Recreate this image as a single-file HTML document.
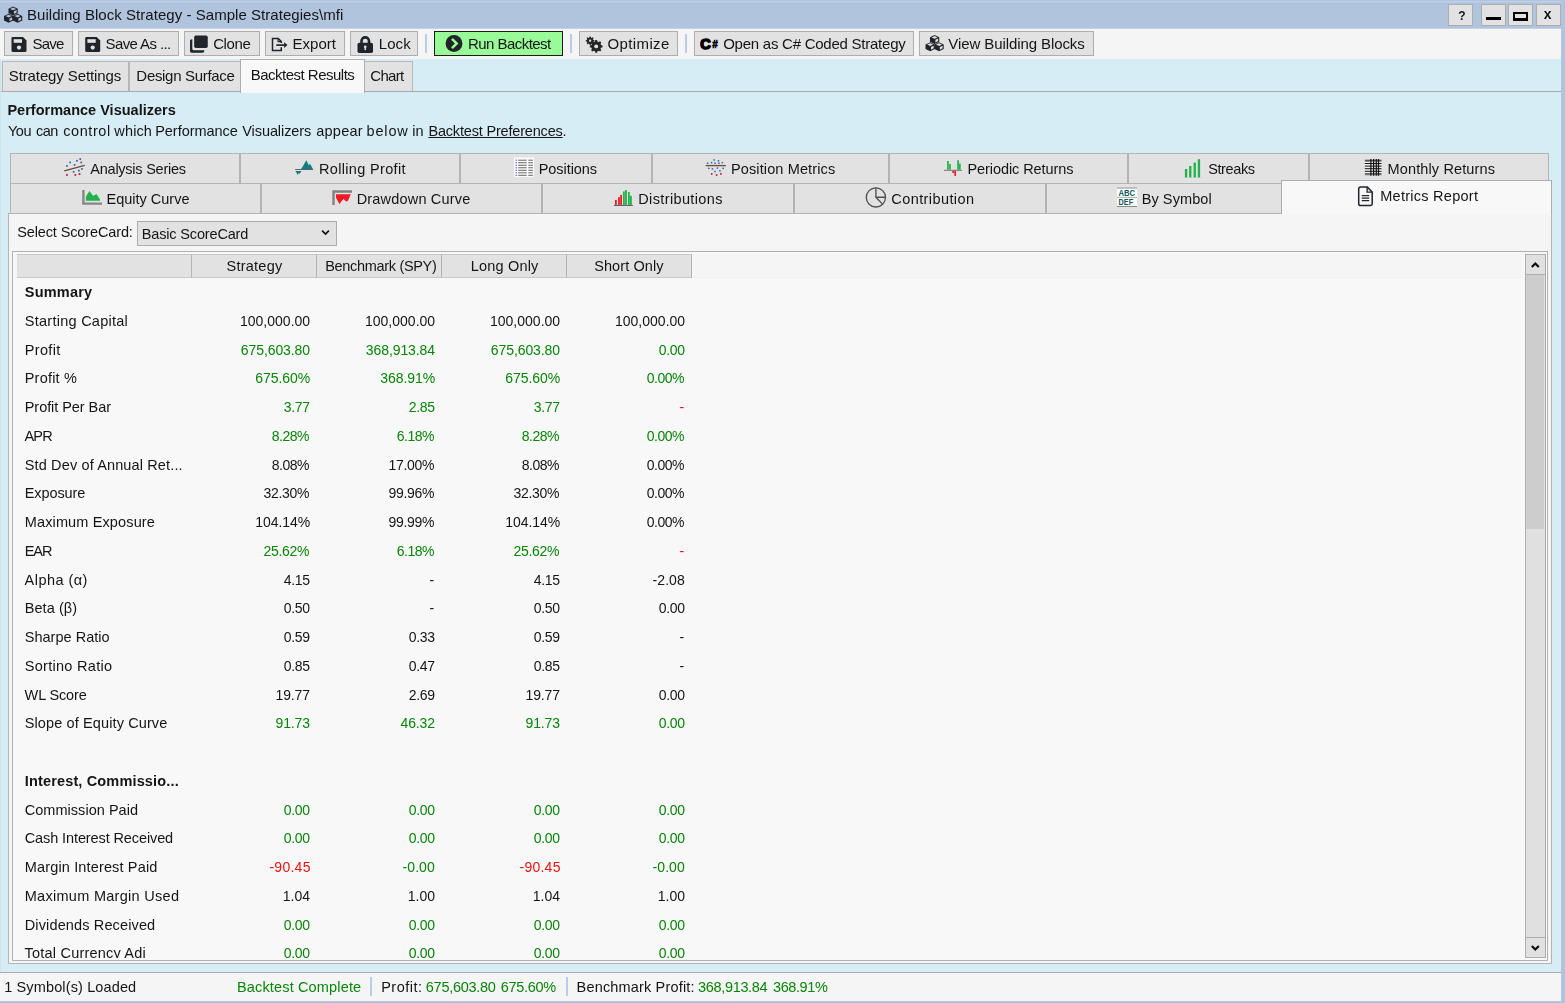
<!DOCTYPE html>
<html lang="en"><head><meta charset="utf-8"><title>Building Block Strategy - Sample Strategies\mfi</title>
<style>
*{box-sizing:border-box;margin:0;padding:0}
html,body{width:1565px;height:1003px;overflow:hidden}
body{position:relative;background:#d7edf5;font-family:"Liberation Sans",sans-serif;font-size:14.500px;color:#151515;}
.abs,.tx,.ic{position:absolute}
.tx{white-space:nowrap;line-height:20px;height:20px;font-size:14.500px;z-index:5;will-change:opacity}
.ic{z-index:5}.ic svg{display:block}
#title{left:0;top:0;width:1565px;height:28px;background:linear-gradient(#b0c4de 0,#b0c4de 1px,#c0d0e8 1px,#c0d0e8 2px,#b5c8e0 2px,#b5c8e0 3px,#b0c4de 3px)}
.wb{position:absolute;top:4px;width:25px;height:22px;background:#e2e2e2;border:1px solid #adadad}
#rb{right:0;top:0;width:4.500px;height:1003px;background:#b0c4de}
#bb{left:0;top:1001px;width:1565px;height:2px;background:#b0c4de}
#toolbar{left:0;top:28px;width:1561px;height:31px;background:#f5f5f5}
.btn{position:absolute;top:31px;height:25px;background:#e2e2e2;border:1px solid #adadad}
.sep{position:absolute;top:34px;width:2px;height:19px;background:#b9cde8}
.tab1{position:absolute;top:61px;height:30px;background:#e2e2e2;border:1px solid #b8b8b8;border-bottom:none}
.tab1.sel{top:59px;height:34px;background:#f8f8f8;border-color:#adadad;z-index:2}
#line1{left:0;top:91px;width:1561px;height:1px;background:#a9a9a9}
.tab2{position:absolute;height:30px;background:#e2e2e2;border:1px solid #b4b4b4}
.tab2.sel{background:#f8f8f8;border-color:#adadad;border-bottom:none;z-index:3}
#panel{left:8px;top:213px;width:1544px;height:751px;background:#f5f5f5;border:1px solid #b4b4b4}
#grid{left:12px;top:251px;width:1536px;height:710px;background:#f8f8f8;border:1px solid #b0b0b0;overflow:hidden}
.hc{position:absolute;top:254px;height:24px;background:#e2e2e2;border-right:1px solid #b4b4b4;border-bottom:1px solid #c8c8c8;border-top:1px solid #c8c8c8}
.g{color:#088408}.r{color:#ee1111}
b{font-weight:bold}
#status{left:0;top:972px;width:1561px;height:29px;background:#f5f5f5;border-top:1px solid #a9a9a9}
</style></head><body>

<div id="title" class="abs"></div>
<div class="ic" style="left:4px;top:6px"><svg width="18" height="17" viewBox="0 0 18 17" style="overflow:visible"><g transform="translate(0.000 0.500)"><path d="M9.10 0.00L13.75 2.35L13.75 6.68L9.10 9.02L4.45 6.68L4.45 2.35Z" fill="#212529"/><path d="M9.10 1.06L12.08 2.39L9.10 3.75L6.12 2.39Z" fill="#b0c4de"/><path d="M9.94 4.81L12.63 3.52L12.63 6.09L9.94 7.61Z" fill="#b0c4de"/><path d="M4.65 7.20L9.30 9.55L9.30 13.88L4.65 16.22L0.00 13.88L0.00 9.55Z" fill="#212529"/><path d="M4.65 8.26L7.63 9.59L4.65 10.95L1.67 9.59Z" fill="#b0c4de"/><path d="M5.49 12.01L8.18 10.72L8.18 13.29L5.49 14.81Z" fill="#b0c4de"/><path d="M13.55 7.20L18.20 9.55L18.20 13.88L13.55 16.22L8.90 13.88L8.90 9.55Z" fill="#212529"/><path d="M13.55 8.26L16.53 9.59L13.55 10.95L10.57 9.59Z" fill="#b0c4de"/><path d="M14.39 12.01L17.08 10.72L17.08 13.29L14.39 14.81Z" fill="#b0c4de"/></g></svg></div>
<div id="t1" class="tx" style="top:4.6px;left:26.98px;font-size:15px;letter-spacing:0.045px;">Building Block Strategy - Sample Strategies\mfi</div>
<div class="wb" style="left:1448px"></div>
<div class="wb" style="left:1481px"></div>
<div class="wb" style="left:1508px"></div>
<div class="wb" style="left:1536px"></div>
<div id="t2" class="tx" style="top:5.5px;left:1458.15px;font-size:12px;"><b>?</b></div>
<div class="abs" style="left:1485.500px;top:17px;width:15px;height:3px;background:#000"></div>
<div class="abs" style="left:1513px;top:12px;width:15px;height:9px;border:3px solid #000;border-width:2.500px 2.500px 3px 2.500px"></div>
<div id="t3" class="tx" style="top:4.3px;left:1543.76px;font-size:14px;"><b>x</b></div>
<div id="toolbar" class="abs"></div>
<div class="abs" style="left:0;top:28px;width:1561px;height:1px;background:#c3d2e5"></div>
<div class="btn" style="left:4px;width:69px;"></div>
<div class="ic" style="left:11px;top:37px"><svg width="15" height="15" viewBox="0 0 15 15" style="overflow:visible"><g transform="translate(0.500 0.000)"><path d="M1.2 0h10.3L15 3.5v10.3c0 .7-.5 1.2-1.2 1.2H1.2C.5 15 0 14.500 0 13.800V1.200C0 .5.5 0 1.200 0z" fill="#212529"/><rect x="2.200" y="2.200" width="8.300" height="3.600" fill="#e2e2e2"/><circle cx="7.500" cy="10.600" r="2.100" fill="#e2e2e2"/></g></svg></div>
<div id="t4" class="tx" style="top:34px;left:32.42px;font-size:15px;letter-spacing:-0.78px;">Save</div>
<div class="btn" style="left:78px;width:101px;"></div>
<div class="ic" style="left:85px;top:37px"><svg width="15" height="15" viewBox="0 0 15 15" style="overflow:visible"><g transform="translate(0.200 0.000)"><path d="M1.2 0h10.3L15 3.5v10.3c0 .7-.5 1.2-1.2 1.2H1.2C.5 15 0 14.500 0 13.800V1.200C0 .5.5 0 1.200 0z" fill="#212529"/><rect x="2.200" y="2.200" width="8.300" height="3.600" fill="#e2e2e2"/><circle cx="7.500" cy="10.600" r="2.100" fill="#e2e2e2"/></g></svg></div>
<div id="t5" class="tx" style="top:34px;left:105.59px;font-size:15px;letter-spacing:-0.603px;">Save As ...</div>
<div class="btn" style="left:184px;width:76px;"></div>
<div class="ic" style="left:189px;top:35px"><svg width="18.500" height="17.500" viewBox="0 0 17 16" style="overflow:visible"><g transform="translate(0.735 0.457)"><rect x="4" y="0" width="12.500" height="11.500" rx="1.600" fill="#212529"/><path d="M2.300 3.500v8.300c0 1 .8 1.800 1.800 1.800h9.200v.7c0 .9-.7 1.600-1.600 1.600H1.800C.8 15.900.200 15.200.200 14.300V5.100c0-.9.700-1.600 1.600-1.600z" fill="#212529"/></g></svg></div>
<div id="t6" class="tx" style="top:34px;left:213.15px;font-size:15px;letter-spacing:-0.36px;">Clone</div>
<div class="btn" style="left:265px;width:80px;"></div>
<div class="ic" style="left:271px;top:37px"><svg width="17" height="14" viewBox="0 0 17 14" fill="none" stroke="#212529" stroke-width="1.500" style="overflow:visible"><g transform="translate(0.500 0.500)"><path d="M9.800 9.800V13H1V1h5.800l3 3v1.500"/><path d="M6.600 1v3.200h3.200" stroke-width="1.200"/><path d="M4.800 7.600h9" stroke-width="1.700"/><path d="M12.600 4.800l3.400 2.800-3.400 2.800z" fill="#212529" stroke="none"/></g></svg></div>
<div id="t7" class="tx" style="top:34px;left:292.59px;font-size:15px;">Export</div>
<div class="btn" style="left:350px;width:68px;"></div>
<div class="ic" style="left:357px;top:35px"><svg width="15.500" height="17.500" viewBox="0 0 15.500 17.500" style="overflow:visible"><g transform="translate(0.500 0.500)"><path d="M4 8V5.600a3.750 3.750 0 0 1 7.500 0V8" fill="none" stroke="#212529" stroke-width="2.600"/><rect x="0" y="7.300" width="15.500" height="10.200" rx="1.700" fill="#212529"/><circle cx="7.750" cy="11.300" r="1.300" fill="#e2e2e2"/><rect x="7" y="11.300" width="1.500" height="3.300" fill="#e2e2e2"/></g></svg></div>
<div id="t8" class="tx" style="top:34px;left:378.81px;font-size:15px;letter-spacing:0.06px;">Lock</div>
<div class="sep" style="left:425px;width:2px;"></div>
<div class="btn" style="left:434px;width:129px;background:#98fb98;border-color:#1c1c1c"></div>
<div class="ic" style="left:445px;top:35px"><svg width="17" height="17" viewBox="0 0 17 17" style="overflow:visible"><g transform="translate(0.500 0.000)"><circle cx="8.500" cy="8.500" r="8.400" fill="#212529"/><path d="M6.500 3.900L11.200 8.500 6.500 13.100" fill="none" stroke="#98fb98" stroke-width="2.500"/></g></svg></div>
<div id="t9" class="tx" style="top:34px;left:467.98px;font-size:15px;letter-spacing:-0.541px;">Run Backtest</div>
<div class="sep" style="left:570px;width:2px;"></div>
<div class="btn" style="left:579px;width:99px;"></div>
<div class="ic" style="left:585px;top:35px"><svg width="18" height="18" viewBox="0 0 18 18"><path d="M4.27 2.73L4.56 1.39L5.74 1.39L6.03 2.73L6.67 2.99L7.82 2.25L8.65 3.08L7.91 4.23L8.17 4.87L9.51 5.16L9.51 6.34L8.17 6.63L7.91 7.27L8.65 8.42L7.82 9.25L6.67 8.51L6.03 8.77L5.74 10.11L4.56 10.11L4.27 8.77L3.63 8.51L2.48 9.25L1.65 8.42L2.39 7.27L2.13 6.63L0.79 6.34L0.79 5.16L2.13 4.87L2.39 4.23L1.65 3.08L2.48 2.25L3.63 2.99Z" fill="#262626"/><circle cx="5.15" cy="5.75" r="2.90" fill="#262626"/><circle cx="5.15" cy="5.75" r="1.15" fill="#e2e2e2"/><path d="M9.83 6.69L10.35 5.06L12.05 5.06L12.57 6.69L13.56 7.11L15.08 6.31L16.29 7.52L15.49 9.04L15.91 10.03L17.54 10.55L17.54 12.25L15.91 12.77L15.49 13.76L16.29 15.28L15.08 16.49L13.56 15.69L12.57 16.11L12.05 17.74L10.35 17.74L9.83 16.11L8.84 15.69L7.32 16.49L6.11 15.28L6.91 13.76L6.49 12.77L4.86 12.25L4.86 10.55L6.49 10.03L6.91 9.04L6.11 7.52L7.32 6.31L8.84 7.11Z" fill="#262626"/><circle cx="11.20" cy="11.40" r="4.51" fill="#262626"/><circle cx="11.20" cy="11.40" r="1.95" fill="#e2e2e2"/></svg></div>
<div id="t10" class="tx" style="top:34px;left:607.59px;font-size:15px;letter-spacing:0.363px;">Optimize</div>
<div class="sep" style="left:685px;width:2px;"></div>
<div class="btn" style="left:694px;width:220px;"></div>
<div class="ic" style="left:700px;top:37px"><svg width="20" height="16" viewBox="0 0 20 16"><text x="0.300" y="12.300" font-family="Liberation Sans,sans-serif" font-weight="bold" font-size="14.500" fill="#000" stroke="#000" stroke-width="1.500" stroke-linejoin="round">C</text><text x="12.200" y="10.800" font-family="Liberation Sans,sans-serif" font-weight="bold" font-size="10" fill="#000" stroke="#000" stroke-width=".5">#</text></svg></div>
<div id="t11" class="tx" style="top:34px;left:723.15px;font-size:15px;letter-spacing:-0.244px;">Open as C# Coded Strategy</div>
<div class="btn" style="left:919px;width:175px;"></div>
<div class="ic" style="left:925px;top:35px"><svg width="18" height="17" viewBox="0 0 18 17" style="overflow:visible"><g transform="translate(0.500 0.000)"><path d="M9.10 0.00L13.75 2.35L13.75 6.68L9.10 9.02L4.45 6.68L4.45 2.35Z" fill="#212529"/><path d="M9.10 1.06L12.08 2.39L9.10 3.75L6.12 2.39Z" fill="#e2e2e2"/><path d="M9.94 4.81L12.63 3.52L12.63 6.09L9.94 7.61Z" fill="#e2e2e2"/><path d="M4.65 7.20L9.30 9.55L9.30 13.88L4.65 16.22L0.00 13.88L0.00 9.55Z" fill="#212529"/><path d="M4.65 8.26L7.63 9.59L4.65 10.95L1.67 9.59Z" fill="#e2e2e2"/><path d="M5.49 12.01L8.18 10.72L8.18 13.29L5.49 14.81Z" fill="#e2e2e2"/><path d="M13.55 7.20L18.20 9.55L18.20 13.88L13.55 16.22L8.90 13.88L8.90 9.55Z" fill="#212529"/><path d="M13.55 8.26L16.53 9.59L13.55 10.95L10.57 9.59Z" fill="#e2e2e2"/><path d="M14.39 12.01L17.08 10.72L17.08 13.29L14.39 14.81Z" fill="#e2e2e2"/></g></svg></div>
<div id="t12" class="tx" style="top:34px;left:948.32px;font-size:15px;letter-spacing:-0.089px;">View Building Blocks</div>
<div id="line1" class="abs"></div>
<div class="tab1" style="left:2px;width:127px;"></div>
<div id="t13" class="tx" style="top:65.8px;left:8.76px;font-size:15px;letter-spacing:-0.108px;">Strategy Settings</div>
<div class="tab1" style="left:129px;width:112px;"></div>
<div id="t14" class="tx" style="top:65.8px;left:136.37px;font-size:15px;letter-spacing:-0.312px;">Design Surface</div>
<div class="tab1 sel" style="left:240px;width:125px;"></div>
<div id="t15" class="tx" style="top:65.1px;left:250.76px;font-size:15px;letter-spacing:-0.51px;">Backtest Results</div>
<div class="tab1" style="left:364px;width:49px;"></div>
<div id="t16" class="tx" style="top:65.8px;left:370.32px;font-size:15px;letter-spacing:-0.724px;">Chart</div>
<div id="t17" class="tx" style="top:99.6px;left:7.42px;letter-spacing:0.009px;"><b>Performance Visualizers</b></div>
<div id="t18" class="tx" style="top:121px;left:7.96px;letter-spacing:-0.45px;">You</div>
<div id="t19" class="tx" style="top:121px;left:36.1px;letter-spacing:-0.63px;">can</div>
<div id="t20" class="tx" style="top:121px;left:63.22px;letter-spacing:0.57px;">control</div>
<div id="t21" class="tx" style="top:121px;left:114.36px;letter-spacing:0.127px;">which</div>
<div id="t22" class="tx" style="top:121px;left:155.2px;letter-spacing:-0.036px;">Performance</div>
<div id="t23" class="tx" style="top:121px;left:242.22px;letter-spacing:-0.072px;">Visualizers</div>
<div id="t24" class="tx" style="top:121px;left:316.22px;letter-spacing:0.252px;">appear</div>
<div id="t25" class="tx" style="top:121px;left:366.46px;letter-spacing:0.863px;">below</div>
<div id="t26" class="tx" style="top:121px;left:412.32px;">in</div>
<div id="t27" class="tx" style="top:121px;left:428.4px;letter-spacing:-0.18px;"><u>Backtest Preferences</u>.</div>
<div id="panel" class="abs"></div>
<div class="tab2" style="left:10px;width:230px;top:153px;height:31px"></div>
<div class="ic" style="left:63px;top:158px"><svg width="23" height="19" viewBox="0 0 23 19"><rect x="16.4" y="0.2" width="1.7" height="1.7" fill="#2f5fb3"/><rect x="13.1" y="1.9" width="1.7" height="1.7" fill="#2f5fb3"/><rect x="6.2" y="3.6" width="1.7" height="1.7" fill="#2f5fb3"/><rect x="17.4" y="3.6" width="1.7" height="1.7" fill="#2f5fb3"/><rect x="10.7" y="6.1" width="1.7" height="1.7" fill="#2f5fb3"/><rect x="3.1" y="7.1" width="1.7" height="1.7" fill="#2f5fb3"/><rect x="18.1" y="10.1" width="1.7" height="1.7" fill="#2f5fb3"/><rect x="15.0" y="11.8" width="1.7" height="1.7" fill="#2f5fb3"/><rect x="9.8" y="13.0" width="1.7" height="1.7" fill="#2f5fb3"/><rect x="3.1" y="16.1" width="1.7" height="1.7" fill="#b3122a"/><rect x="11.5" y="16.1" width="1.7" height="1.7" fill="#b3122a"/><rect x="15.7" y="15.2" width="1.7" height="1.7" fill="#b3122a"/><path d="M1.300 12.900L21.700 7.300" stroke="#6b4a30" stroke-width="1.300"/></svg></div>
<div id="t28" class="tx" style="top:158.9px;left:90.32px;letter-spacing:-0.244px;">Analysis Series</div>
<div class="tab2" style="left:240px;width:220px;top:153px;height:31px"></div>
<div class="ic" style="left:294px;top:159px"><svg width="20" height="17" viewBox="0 0 20 17"><path d="M6.800 10.200L8.900 7.200 12.300 1.300 14.800 6.300 16 4.700 19.100 10.200Z" fill="#128080"/><path d="M1.500 11.900H7.400L5.800 14.900 4.900 13.700 3.700 15.900Z" fill="#128080"/><path d="M1.100 10.500h18" stroke="#555" stroke-width=".9"/></svg></div>
<div id="t29" class="tx" style="top:158.9px;left:318.98px;letter-spacing:0.332px;">Rolling Profit</div>
<div class="tab2" style="left:460px;width:192px;top:153px;height:31px"></div>
<div class="ic" style="left:514px;top:157px"><svg width="20" height="19.500" viewBox="0 0 20 19.500" style="overflow:visible"><g transform="translate(0.000 0.500)"><rect width="20" height="19.500" fill="#fbfbfb"/><rect x="1.600" y="2.10" width="1.200" height="1.200" fill="#4a4af0"/><rect x="4.200" y="2.20" width="8.500" height="1" fill="#666"/><rect x="14.300" y="2.20" width="4.600" height="1" fill="#666"/><rect x="1.600" y="4.62" width="1.200" height="1.200" fill="#4a4af0"/><rect x="4.200" y="4.72" width="8.500" height="1" fill="#666"/><rect x="14.300" y="4.72" width="4.600" height="1" fill="#666"/><rect x="1.600" y="7.14" width="1.200" height="1.200" fill="#4a4af0"/><rect x="4.200" y="7.24" width="8.500" height="1" fill="#666"/><rect x="14.300" y="7.24" width="4.600" height="1" fill="#666"/><rect x="1.600" y="9.66" width="1.200" height="1.200" fill="#4a4af0"/><rect x="4.200" y="9.76" width="8.500" height="1" fill="#666"/><rect x="14.300" y="9.76" width="4.600" height="1" fill="#666"/><rect x="1.600" y="12.18" width="1.200" height="1.200" fill="#4a4af0"/><rect x="4.200" y="12.28" width="8.500" height="1" fill="#666"/><rect x="14.300" y="12.28" width="4.600" height="1" fill="#666"/><rect x="1.600" y="14.70" width="1.200" height="1.200" fill="#4a4af0"/><rect x="4.200" y="14.80" width="8.500" height="1" fill="#666"/><rect x="14.300" y="14.80" width="4.600" height="1" fill="#666"/><rect x="1.600" y="17.22" width="1.200" height="1.200" fill="#4a4af0"/><rect x="4.200" y="17.32" width="8.500" height="1" fill="#666"/><rect x="14.300" y="17.32" width="4.600" height="1" fill="#666"/></g></svg></div>
<div id="t30" class="tx" style="top:158.9px;left:538.76px;letter-spacing:-0.06px;">Positions</div>
<div class="tab2" style="left:652px;width:237px;top:153px;height:31px"></div>
<div class="ic" style="left:705px;top:159px"><svg width="22" height="17" viewBox="0 0 22 17"><rect x="8.4" y="0.2" width="1.5" height="1.5" fill="#2f5fb3"/><rect x="12.7" y="1.1" width="1.5" height="1.5" fill="#2f5fb3"/><rect x="5.8" y="2.9" width="1.5" height="1.5" fill="#2f5fb3"/><rect x="9.3" y="3.5" width="1.5" height="1.5" fill="#2f5fb3"/><rect x="13.2" y="3.5" width="1.5" height="1.5" fill="#2f5fb3"/><rect x="16.6" y="2.9" width="1.5" height="1.5" fill="#2f5fb3"/><rect x="1.8" y="3.5" width="1.5" height="1.5" fill="#2f5fb3"/><rect x="3.1" y="8.6" width="1.5" height="1.5" fill="#2f5fb3"/><rect x="6.7" y="9.1" width="1.5" height="1.5" fill="#2f5fb3"/><rect x="11.7" y="8.3" width="1.5" height="1.5" fill="#2f5fb3"/><rect x="17.4" y="8.6" width="1.5" height="1.5" fill="#2f5fb3"/><rect x="9.2" y="11.7" width="1.5" height="1.5" fill="#2f5fb3"/><rect x="14.2" y="11.1" width="1.5" height="1.5" fill="#2f5fb3"/><rect x="5.9" y="14.1" width="1.6" height="1.6" fill="#b3122a"/><rect x="10.8" y="15.2" width="1.6" height="1.6" fill="#b3122a"/><rect x="15.1" y="14.1" width="1.6" height="1.6" fill="#b3122a"/><path d="M0.700 6.600H20.900" stroke="#6b4a30" stroke-width="1.300"/></svg></div>
<div id="t31" class="tx" style="top:158.9px;left:730.98px;letter-spacing:0.126px;">Position Metrics</div>
<div class="tab2" style="left:889px;width:239px;top:153px;height:31px"></div>
<div class="ic" style="left:943px;top:160px"><svg width="19" height="16.500" viewBox="0 0 19 16.500" style="overflow:visible"><g transform="translate(0.500 0.000)"><rect x="3.6" y="1.0" width="1.700" height="8.7" fill="#22b14c"/><rect x="5.6" y="4.0" width="1.700" height="5.7" fill="#22b14c"/><rect x="13.7" y="0.2" width="1.700" height="9.5" fill="#22b14c"/><rect x="15.5" y="3.6" width="1.700" height="6.1" fill="#22b14c"/><rect x="8.800" y="10.800" width="1.700" height="2.200" fill="#ed1c24"/><rect x="10.800" y="10.800" width="1.700" height="5.100" fill="#ed1c24"/><path d="M0.500 10.300H18.400" stroke="#666" stroke-width=".9"/></g></svg></div>
<div id="t32" class="tx" style="top:158.9px;left:967.42px;letter-spacing:-0.072px;">Periodic Returns</div>
<div class="tab2" style="left:1128px;width:181px;top:153px;height:31px"></div>
<div class="ic" style="left:1184px;top:159px"><svg width="16" height="19" viewBox="0 0 16 19" style="overflow:visible"><g transform="translate(0.500 0.000)"><rect x="0.4" y="10.0" width="2.300" height="8.5" fill="#22b14c"/><rect x="4.6" y="7.0" width="2.300" height="11.5" fill="#22b14c"/><rect x="9.1" y="3.6" width="2.300" height="14.9" fill="#22b14c"/><rect x="13.3" y="0.2" width="2.300" height="18.3" fill="#22b14c"/></g></svg></div>
<div id="t33" class="tx" style="top:158.9px;left:1208.15px;letter-spacing:-0.375px;">Streaks</div>
<div class="tab2" style="left:1309px;width:240px;top:153px;height:31px"></div>
<div class="ic" style="left:1364px;top:158px"><svg width="17.500" height="17.500" viewBox="0 0 17.500 17.500" style="overflow:visible"><g transform="translate(0.500 0.500)"><rect x=".4" y=".5" width="16.600" height="16.700" fill="#f0f0f0"/><rect x=".4" y=".5" width="16.600" height="1.800" fill="#b8b8b8"/><rect x=".4" y="15.600" width="16.600" height="1.600" fill="#b8b8b8"/><rect x=".4" y="1.90" width="16.600" height="1" fill="#111"/><rect x=".4" y="4.50" width="16.600" height="1" fill="#111"/><rect x=".4" y="7.10" width="16.600" height="1" fill="#111"/><rect x=".4" y="9.70" width="16.600" height="1" fill="#111"/><rect x=".4" y="12.30" width="16.600" height="1" fill="#111"/><rect x=".4" y="14.90" width="16.600" height="1" fill="#111"/><rect x="5.8" y=".5" width="1.200" height="16.700" fill="#111"/><rect x="8.5" y=".5" width="1.200" height="16.700" fill="#111"/><rect x="11.2" y=".5" width="1.200" height="16.700" fill="#111"/><rect x="13.4" y=".5" width="1.200" height="16.700" fill="#111"/></g></svg></div>
<div id="t34" class="tx" style="top:158.9px;left:1387.59px;letter-spacing:0.129px;">Monthly Returns</div>
<div class="tab2" style="left:10px;width:251px;top:183px;height:31px"></div>
<div class="ic" style="left:82px;top:190px"><svg width="21" height="16" viewBox="0 0 21 16"><path d="M1.400 0V13.600H20" fill="none" stroke="#858585" stroke-width="2.400"/><path d="M3.900 10.800V6.500L7.400 .9 11.300 6 14.400 4 18 9.600V10.800Z" fill="#22b14c"/></svg></div>
<div id="t35" class="tx" style="top:188.8px;left:106.59px;letter-spacing:-0.009px;">Equity Curve</div>
<div class="tab2" style="left:261px;width:281px;top:183px;height:31px"></div>
<div class="ic" style="left:332px;top:190px"><svg width="21" height="16" viewBox="0 0 21 16"><path d="M1.500 15V1.500H20" fill="none" stroke="#808080" stroke-width="2.400"/><path d="M4 4.200H18.800L16 10.800 14.200 11.400 11.400 9 7.400 13.900 4 7.700Z" fill="#ed1c24"/></svg></div>
<div id="t36" class="tx" style="top:188.8px;left:356.64px;letter-spacing:0.19px;">Drawdown Curve</div>
<div class="tab2" style="left:542px;width:252px;top:183px;height:31px"></div>
<div class="ic" style="left:613px;top:189px"><svg width="20" height="17" viewBox="0 0 20 17" style="overflow:visible"><g transform="translate(0.500 0.500)"><rect x="1.5" y="10.4" width="1.800" height="5.0" fill="#ed1c24"/><rect x="4.6" y="7.7" width="1.800" height="7.7" fill="#ed1c24"/><rect x="6.7" y="5.4" width="1.800" height="10.0" fill="#ed1c24"/><rect x="9.5" y="1.9" width="1.800" height="13.5" fill="#22b14c"/><rect x="11.6" y="0.5" width="1.800" height="14.9" fill="#22b14c"/><rect x="14.5" y="2.5" width="1.800" height="12.9" fill="#22b14c"/><rect x="16.5" y="6.3" width="1.800" height="9.1" fill="#22b14c"/><path d="M0.400 15.900H19.400" stroke="#555" stroke-width="1"/></g></svg></div>
<div id="t37" class="tx" style="top:188.8px;left:638.25px;letter-spacing:0.371px;">Distributions</div>
<div class="tab2" style="left:794px;width:252px;top:183px;height:31px"></div>
<div class="ic" style="left:865px;top:186px"><svg width="22" height="22" viewBox="0 0 22 22" fill="none" stroke="#505050" stroke-width="1.350" style="overflow:visible"><g transform="translate(0.000 0.500)"><circle cx="10.900" cy="10.900" r="9.600"/><path d="M10.900 1.300V10.700H20.400M10.900 10.700L17.300 17.400"/></g></svg></div>
<div id="t38" class="tx" style="top:188.8px;left:891.32px;letter-spacing:0.409px;">Contribution</div>
<div class="tab2" style="left:1046px;width:236px;top:183px;height:31px"></div>
<div class="ic" style="left:1117px;top:187px"><svg width="20" height="19.500" viewBox="0 0 20 19.500" style="overflow:visible"><g transform="translate(0.000 0.500)"><rect width="20" height="19.500" fill="#fdfdfd"/><path d="M0 .5h20M0 19h20" stroke="#8a8a8a" stroke-width="1"/><path d="M0 9.900h20" stroke="#999" stroke-width=".8"/><text x="1.400" y="8.400" textLength="16.600" lengthAdjust="spacingAndGlyphs" font-family="Liberation Sans,sans-serif" font-weight="bold" font-size="8.300" fill="#0c5c5c">ABC</text><text x="1.600" y="17.300" textLength="14.500" lengthAdjust="spacingAndGlyphs" font-family="Liberation Sans,sans-serif" font-weight="bold" font-size="8.300" fill="#0c5c5c">DEF</text></g></svg></div>
<div id="t39" class="tx" style="top:188.8px;left:1141.64px;letter-spacing:0.098px;">By Symbol</div>
<div class="tab2 sel" style="left:1281px;width:271px;top:180px;height:34px"></div>
<div class="ic" style="left:1357px;top:186px"><svg width="16" height="21" viewBox="0 0 16 21" fill="none" stroke="#212529" stroke-width="1.500" style="overflow:visible"><g transform="translate(0.500 0.000)"><path d="M3 1.100h6.800l4.900 4.900v11.700a1.800 1.800 0 0 1-1.800 1.800h-9.900a1.800 1.800 0 0 1-1.800-1.800V2.900A1.800 1.800 0 0 1 3 1.100z"/><path d="M9.600 1.300v4.900h4.900" stroke-width="1.300"/><path d="M4.300 9.600h7.400M4.300 12.100h7.400M4.300 14.600h7.400" stroke-width="1.300"/></g></svg></div>
<div id="t40" class="tx" style="top:186.3px;left:1380.25px;letter-spacing:0.262px;">Metrics Report</div>
<div id="t41" class="tx" style="top:222px;left:17.15px;letter-spacing:-0.12px;">Select ScoreCard:</div>
<div class="abs" style="left:137px;top:221px;width:200px;height:25px;background:#e2e2e2;border:1px solid #adadad"></div>
<div id="t42" class="tx" style="top:223.6px;left:141.81px;letter-spacing:-0.161px;">Basic ScoreCard</div>
<div class="ic" style="left:321px;top:229px"><svg width="10" height="8" viewBox="0 0 10 8"><path d="M1.100 1.700l3.400 3.400 3.400-3.400" fill="none" stroke="#111" stroke-width="1.700"/></svg></div>
<div id="grid" class="abs"></div>
<div class="abs" style="left:14px;top:254px;width:1509px;height:24px;background:#f5f5f5;border-bottom:1px solid #f0f0f0"></div>
<div class="hc" style="left:17px;width:175px;"></div>
<div class="hc" style="left:192px;width:125px;"></div>
<div id="t43" class="tx" style="top:256px;left:226.59px;letter-spacing:0.235px;">Strategy</div>
<div class="hc" style="left:317px;width:125px;"></div>
<div id="t44" class="tx" style="top:256px;left:325.25px;letter-spacing:-0.321px;">Benchmark (SPY)</div>
<div class="hc" style="left:442px;width:125px;"></div>
<div id="t45" class="tx" style="top:256px;left:470.76px;letter-spacing:0.189px;">Long Only</div>
<div class="hc" style="left:567px;width:125px;"></div>
<div id="t46" class="tx" style="top:256px;left:594.2px;letter-spacing:0.1px;">Short Only</div>
<div class="abs" style="left:0;top:278px;width:1523px;height:679.500px;overflow:hidden">
<div id="t47" class="tx" style="top:4.1px;left:24.76px;letter-spacing:0.225px;"><b>Summary</b></div>
<div id="t48" class="tx" style="top:32.85px;left:24.76px;letter-spacing:0.264px;">Starting Capital</div>
<div id="t49" class="tx" style="top:32.85px;left:239.94px;font-size:14px;letter-spacing:0.012px;">100,000.00</div>
<div id="t50" class="tx" style="top:32.85px;left:364.94px;font-size:14px;letter-spacing:0.012px;">100,000.00</div>
<div id="t51" class="tx" style="top:32.85px;left:489.94px;font-size:14px;letter-spacing:0.012px;">100,000.00</div>
<div id="t52" class="tx" style="top:32.85px;left:614.94px;font-size:14px;letter-spacing:0.012px;">100,000.00</div>
<div id="t53" class="tx" style="top:61.6px;left:24.76px;letter-spacing:0.324px;">Profit</div>
<div id="t54" class="tx g" style="top:61.6px;left:240.84px;font-size:14px;letter-spacing:-0.088px;">675,603.80</div>
<div id="t55" class="tx g" style="top:61.6px;left:365.84px;font-size:14px;letter-spacing:-0.088px;">368,913.84</div>
<div id="t56" class="tx g" style="top:61.6px;left:490.84px;font-size:14px;letter-spacing:-0.088px;">675,603.80</div>
<div id="t57" class="tx g" style="top:61.6px;left:658.67px;font-size:14px;letter-spacing:-0.312px;">0.00</div>
<div id="t58" class="tx" style="top:90.35px;left:24.76px;letter-spacing:0.198px;">Profit %</div>
<div id="t59" class="tx g" style="top:90.35px;left:255.33px;font-size:14px;letter-spacing:-0.066px;">675.60%</div>
<div id="t60" class="tx g" style="top:90.35px;left:380.33px;font-size:14px;letter-spacing:-0.066px;">368.91%</div>
<div id="t61" class="tx g" style="top:90.35px;left:505.33px;font-size:14px;letter-spacing:-0.066px;">675.60%</div>
<div id="t62" class="tx g" style="top:90.35px;left:646.67px;font-size:14px;letter-spacing:-0.459px;">0.00%</div>
<div id="t63" class="tx" style="top:119.1px;left:24.76px;letter-spacing:-0.056px;">Profit Per Bar</div>
<div id="t64" class="tx g" style="top:119.1px;left:283.67px;font-size:14px;letter-spacing:-0.312px;">3.77</div>
<div id="t65" class="tx g" style="top:119.1px;left:408.67px;font-size:14px;letter-spacing:-0.312px;">2.85</div>
<div id="t66" class="tx g" style="top:119.1px;left:533.67px;font-size:14px;letter-spacing:-0.312px;">3.77</div>
<div id="t67" class="tx r" style="top:119.1px;left:679.55px;font-size:14px;">-</div>
<div id="t68" class="tx" style="top:147.85px;left:24.6px;letter-spacing:-0.9px;">APR</div>
<div id="t69" class="tx g" style="top:147.85px;left:271.67px;font-size:14px;letter-spacing:-0.459px;">8.28%</div>
<div id="t70" class="tx g" style="top:147.85px;left:396.67px;font-size:14px;letter-spacing:-0.459px;">6.18%</div>
<div id="t71" class="tx g" style="top:147.85px;left:521.67px;font-size:14px;letter-spacing:-0.459px;">8.28%</div>
<div id="t72" class="tx g" style="top:147.85px;left:646.67px;font-size:14px;letter-spacing:-0.459px;">0.00%</div>
<div id="t73" class="tx" style="top:176.6px;left:24.76px;letter-spacing:0.134px;">Std Dev of Annual Ret...</div>
<div id="t74" class="tx" style="top:176.6px;left:271.67px;font-size:14px;letter-spacing:-0.459px;">8.08%</div>
<div id="t75" class="tx" style="top:176.6px;left:388.5px;font-size:14px;letter-spacing:-0.328px;">17.00%</div>
<div id="t76" class="tx" style="top:176.6px;left:521.67px;font-size:14px;letter-spacing:-0.459px;">8.08%</div>
<div id="t77" class="tx" style="top:176.6px;left:646.67px;font-size:14px;letter-spacing:-0.459px;">0.00%</div>
<div id="t78" class="tx" style="top:205.35px;left:24.76px;letter-spacing:-0.096px;">Exposure</div>
<div id="t79" class="tx" style="top:205.35px;left:263.5px;font-size:14px;letter-spacing:-0.328px;">32.30%</div>
<div id="t80" class="tx" style="top:205.35px;left:388.5px;font-size:14px;letter-spacing:-0.328px;">99.96%</div>
<div id="t81" class="tx" style="top:205.35px;left:513.5px;font-size:14px;letter-spacing:-0.328px;">32.30%</div>
<div id="t82" class="tx" style="top:205.35px;left:646.67px;font-size:14px;letter-spacing:-0.459px;">0.00%</div>
<div id="t83" class="tx" style="top:234.1px;left:24.76px;letter-spacing:0.132px;">Maximum Exposure</div>
<div id="t84" class="tx" style="top:234.1px;left:255.33px;font-size:14px;letter-spacing:-0.066px;">104.14%</div>
<div id="t85" class="tx" style="top:234.1px;left:388.5px;font-size:14px;letter-spacing:-0.328px;">99.99%</div>
<div id="t86" class="tx" style="top:234.1px;left:505.33px;font-size:14px;letter-spacing:-0.066px;">104.14%</div>
<div id="t87" class="tx" style="top:234.1px;left:646.67px;font-size:14px;letter-spacing:-0.459px;">0.00%</div>
<div id="t88" class="tx" style="top:262.85px;left:24.76px;letter-spacing:-1.08px;">EAR</div>
<div id="t89" class="tx g" style="top:262.85px;left:263.5px;font-size:14px;letter-spacing:-0.328px;">25.62%</div>
<div id="t90" class="tx g" style="top:262.85px;left:396.67px;font-size:14px;letter-spacing:-0.459px;">6.18%</div>
<div id="t91" class="tx g" style="top:262.85px;left:513.5px;font-size:14px;letter-spacing:-0.328px;">25.62%</div>
<div id="t92" class="tx r" style="top:262.85px;left:679.55px;font-size:14px;">-</div>
<div id="t93" class="tx" style="top:291.6px;left:24.6px;letter-spacing:0.45px;">Alpha (α)</div>
<div id="t94" class="tx" style="top:291.6px;left:283.67px;font-size:14px;letter-spacing:-0.312px;">4.15</div>
<div id="t95" class="tx" style="top:291.6px;left:429.55px;font-size:14px;">-</div>
<div id="t96" class="tx" style="top:291.6px;left:533.67px;font-size:14px;letter-spacing:-0.312px;">4.15</div>
<div id="t97" class="tx" style="top:291.6px;left:652.62px;font-size:14px;letter-spacing:0.043px;">-2.08</div>
<div id="t98" class="tx" style="top:320.35px;left:24.76px;letter-spacing:0.066px;">Beta (β)</div>
<div id="t99" class="tx" style="top:320.35px;left:283.67px;font-size:14px;letter-spacing:-0.312px;">0.50</div>
<div id="t100" class="tx" style="top:320.35px;left:429.55px;font-size:14px;">-</div>
<div id="t101" class="tx" style="top:320.35px;left:533.67px;font-size:14px;letter-spacing:-0.312px;">0.50</div>
<div id="t102" class="tx" style="top:320.35px;left:658.67px;font-size:14px;letter-spacing:-0.312px;">0.00</div>
<div id="t103" class="tx" style="top:349.1px;left:24.76px;letter-spacing:0.019px;">Sharpe Ratio</div>
<div id="t104" class="tx" style="top:349.1px;left:283.67px;font-size:14px;letter-spacing:-0.312px;">0.59</div>
<div id="t105" class="tx" style="top:349.1px;left:408.67px;font-size:14px;letter-spacing:-0.312px;">0.33</div>
<div id="t106" class="tx" style="top:349.1px;left:533.67px;font-size:14px;letter-spacing:-0.312px;">0.59</div>
<div id="t107" class="tx" style="top:349.1px;left:679.55px;font-size:14px;">-</div>
<div id="t108" class="tx" style="top:377.85px;left:24.76px;letter-spacing:0.289px;">Sortino Ratio</div>
<div id="t109" class="tx" style="top:377.85px;left:283.67px;font-size:14px;letter-spacing:-0.312px;">0.85</div>
<div id="t110" class="tx" style="top:377.85px;left:408.67px;font-size:14px;letter-spacing:-0.312px;">0.47</div>
<div id="t111" class="tx" style="top:377.85px;left:533.67px;font-size:14px;letter-spacing:-0.312px;">0.85</div>
<div id="t112" class="tx" style="top:377.85px;left:679.55px;font-size:14px;">-</div>
<div id="t113" class="tx" style="top:406.6px;left:24.6px;letter-spacing:-0.13px;">WL Score</div>
<div id="t114" class="tx" style="top:406.6px;left:275.5px;font-size:14px;letter-spacing:-0.148px;">19.77</div>
<div id="t115" class="tx" style="top:406.6px;left:408.67px;font-size:14px;letter-spacing:-0.312px;">2.69</div>
<div id="t116" class="tx" style="top:406.6px;left:525.5px;font-size:14px;letter-spacing:-0.148px;">19.77</div>
<div id="t117" class="tx" style="top:406.6px;left:658.67px;font-size:14px;letter-spacing:-0.312px;">0.00</div>
<div id="t118" class="tx" style="top:435.35px;left:24.76px;letter-spacing:0.114px;">Slope of Equity Curve</div>
<div id="t119" class="tx g" style="top:435.35px;left:275.5px;font-size:14px;letter-spacing:-0.148px;">91.73</div>
<div id="t120" class="tx g" style="top:435.35px;left:400.5px;font-size:14px;letter-spacing:-0.148px;">46.32</div>
<div id="t121" class="tx g" style="top:435.35px;left:525.5px;font-size:14px;letter-spacing:-0.148px;">91.73</div>
<div id="t122" class="tx g" style="top:435.35px;left:658.67px;font-size:14px;letter-spacing:-0.312px;">0.00</div>
<div id="t123" class="tx" style="top:492.85px;left:24.76px;letter-spacing:0.154px;"><b>Interest, Commissio...</b></div>
<div id="t124" class="tx" style="top:521.6px;left:24.76px;letter-spacing:0.034px;">Commission Paid</div>
<div id="t125" class="tx g" style="top:521.6px;left:283.67px;font-size:14px;letter-spacing:-0.312px;">0.00</div>
<div id="t126" class="tx g" style="top:521.6px;left:408.67px;font-size:14px;letter-spacing:-0.312px;">0.00</div>
<div id="t127" class="tx g" style="top:521.6px;left:533.67px;font-size:14px;letter-spacing:-0.312px;">0.00</div>
<div id="t128" class="tx g" style="top:521.6px;left:658.67px;font-size:14px;letter-spacing:-0.312px;">0.00</div>
<div id="t129" class="tx" style="top:550.35px;left:24.76px;letter-spacing:-0.109px;">Cash Interest Received</div>
<div id="t130" class="tx g" style="top:550.35px;left:283.67px;font-size:14px;letter-spacing:-0.312px;">0.00</div>
<div id="t131" class="tx g" style="top:550.35px;left:408.67px;font-size:14px;letter-spacing:-0.312px;">0.00</div>
<div id="t132" class="tx g" style="top:550.35px;left:533.67px;font-size:14px;letter-spacing:-0.312px;">0.00</div>
<div id="t133" class="tx g" style="top:550.35px;left:658.67px;font-size:14px;letter-spacing:-0.312px;">0.00</div>
<div id="t134" class="tx" style="top:579.1px;left:24.76px;letter-spacing:0.148px;">Margin Interest Paid</div>
<div id="t135" class="tx r" style="top:579.1px;left:269.45px;font-size:14px;letter-spacing:0.261px;">-90.45</div>
<div id="t136" class="tx g" style="top:579.1px;left:402.62px;font-size:14px;letter-spacing:0.043px;">-0.00</div>
<div id="t137" class="tx r" style="top:579.1px;left:519.46px;font-size:14px;letter-spacing:0.261px;">-90.45</div>
<div id="t138" class="tx g" style="top:579.1px;left:652.62px;font-size:14px;letter-spacing:0.043px;">-0.00</div>
<div id="t139" class="tx" style="top:607.85px;left:24.76px;letter-spacing:0.285px;">Maximum Margin Used</div>
<div id="t140" class="tx" style="top:607.85px;left:282.77px;font-size:14px;letter-spacing:-0.012px;">1.04</div>
<div id="t141" class="tx" style="top:607.85px;left:407.77px;font-size:14px;letter-spacing:-0.012px;">1.00</div>
<div id="t142" class="tx" style="top:607.85px;left:532.77px;font-size:14px;letter-spacing:-0.012px;">1.04</div>
<div id="t143" class="tx" style="top:607.85px;left:657.77px;font-size:14px;letter-spacing:-0.012px;">1.00</div>
<div id="t144" class="tx" style="top:636.6px;left:24.76px;letter-spacing:0.133px;">Dividends Received</div>
<div id="t145" class="tx g" style="top:636.6px;left:283.67px;font-size:14px;letter-spacing:-0.312px;">0.00</div>
<div id="t146" class="tx g" style="top:636.6px;left:408.67px;font-size:14px;letter-spacing:-0.312px;">0.00</div>
<div id="t147" class="tx g" style="top:636.6px;left:533.67px;font-size:14px;letter-spacing:-0.312px;">0.00</div>
<div id="t148" class="tx g" style="top:636.6px;left:658.67px;font-size:14px;letter-spacing:-0.312px;">0.00</div>
<div id="t149" class="tx" style="top:665.35px;left:24.6px;letter-spacing:0.204px;">Total Currency Adj</div>
<div id="t150" class="tx g" style="top:665.35px;left:283.67px;font-size:14px;letter-spacing:-0.312px;">0.00</div>
<div id="t151" class="tx g" style="top:665.35px;left:408.67px;font-size:14px;letter-spacing:-0.312px;">0.00</div>
<div id="t152" class="tx g" style="top:665.35px;left:533.67px;font-size:14px;letter-spacing:-0.312px;">0.00</div>
<div id="t153" class="tx g" style="top:665.35px;left:658.67px;font-size:14px;letter-spacing:-0.312px;">0.00</div>
</div>
<div class="abs" style="left:1525px;top:254px;width:21px;height:704px;background:#e0e0e0;border:1px solid #adadad"></div>
<div class="abs" style="left:1526px;top:275px;width:18px;height:254px;background:#cdcdcd"></div>
<div class="abs" style="left:1525px;top:274px;width:21px;height:1px;background:#adadad"></div>
<div class="abs" style="left:1525px;top:937px;width:21px;height:1px;background:#adadad"></div>
<div class="ic" style="left:1530px;top:261px"><svg width="11" height="8" viewBox="0 0 11 8"><path d="M1.800 6L5.300 2.500 8.800 6" fill="none" stroke="#0a0a0a" stroke-width="2.100"/></svg></div>
<div class="ic" style="left:1530px;top:944px"><svg width="11" height="8" viewBox="0 0 11 8"><path d="M1.800 1.900L5.300 5.400 8.800 1.900" fill="none" stroke="#0a0a0a" stroke-width="2.100"/></svg></div>
<div id="status" class="abs"></div>
<div id="t154" class="tx" style="top:977px;left:4.2px;letter-spacing:0.131px;">1 Symbol(s) Loaded</div>
<div id="t155" class="tx g" style="top:977px;left:236.98px;letter-spacing:0.154px;">Backtest Complete</div>
<div class="abs" style="left:370px;top:977px;width:2px;height:19px;background:#b9cde8"></div>
<div id="t156" class="tx" style="top:977px;left:381.2px;letter-spacing:0.48px;">Profit:</div>
<div id="t157" class="tx g" style="top:977px;left:425.84px;letter-spacing:-0.28px;">675,603.80</div>
<div id="t158" class="tx g" style="top:977px;left:500.7px;letter-spacing:-0.3px;">675.60%</div>
<div class="abs" style="left:565.500px;top:977px;width:2px;height:19px;background:#b9cde8"></div>
<div id="t159" class="tx" style="top:977px;left:576.58px;letter-spacing:0.168px;">Benchmark Profit:</div>
<div id="t160" class="tx g" style="top:977px;left:698.08px;letter-spacing:-0.34px;">368,913.84</div>
<div id="t161" class="tx g" style="top:977px;left:773.08px;letter-spacing:-0.42px;">368.91%</div>
<div class="abs" style="left:0;top:59px;width:1px;height:913px;background:#cfe5ee"></div>
<div id="rb" class="abs"></div><div id="bb" class="abs"></div>
</body></html>
